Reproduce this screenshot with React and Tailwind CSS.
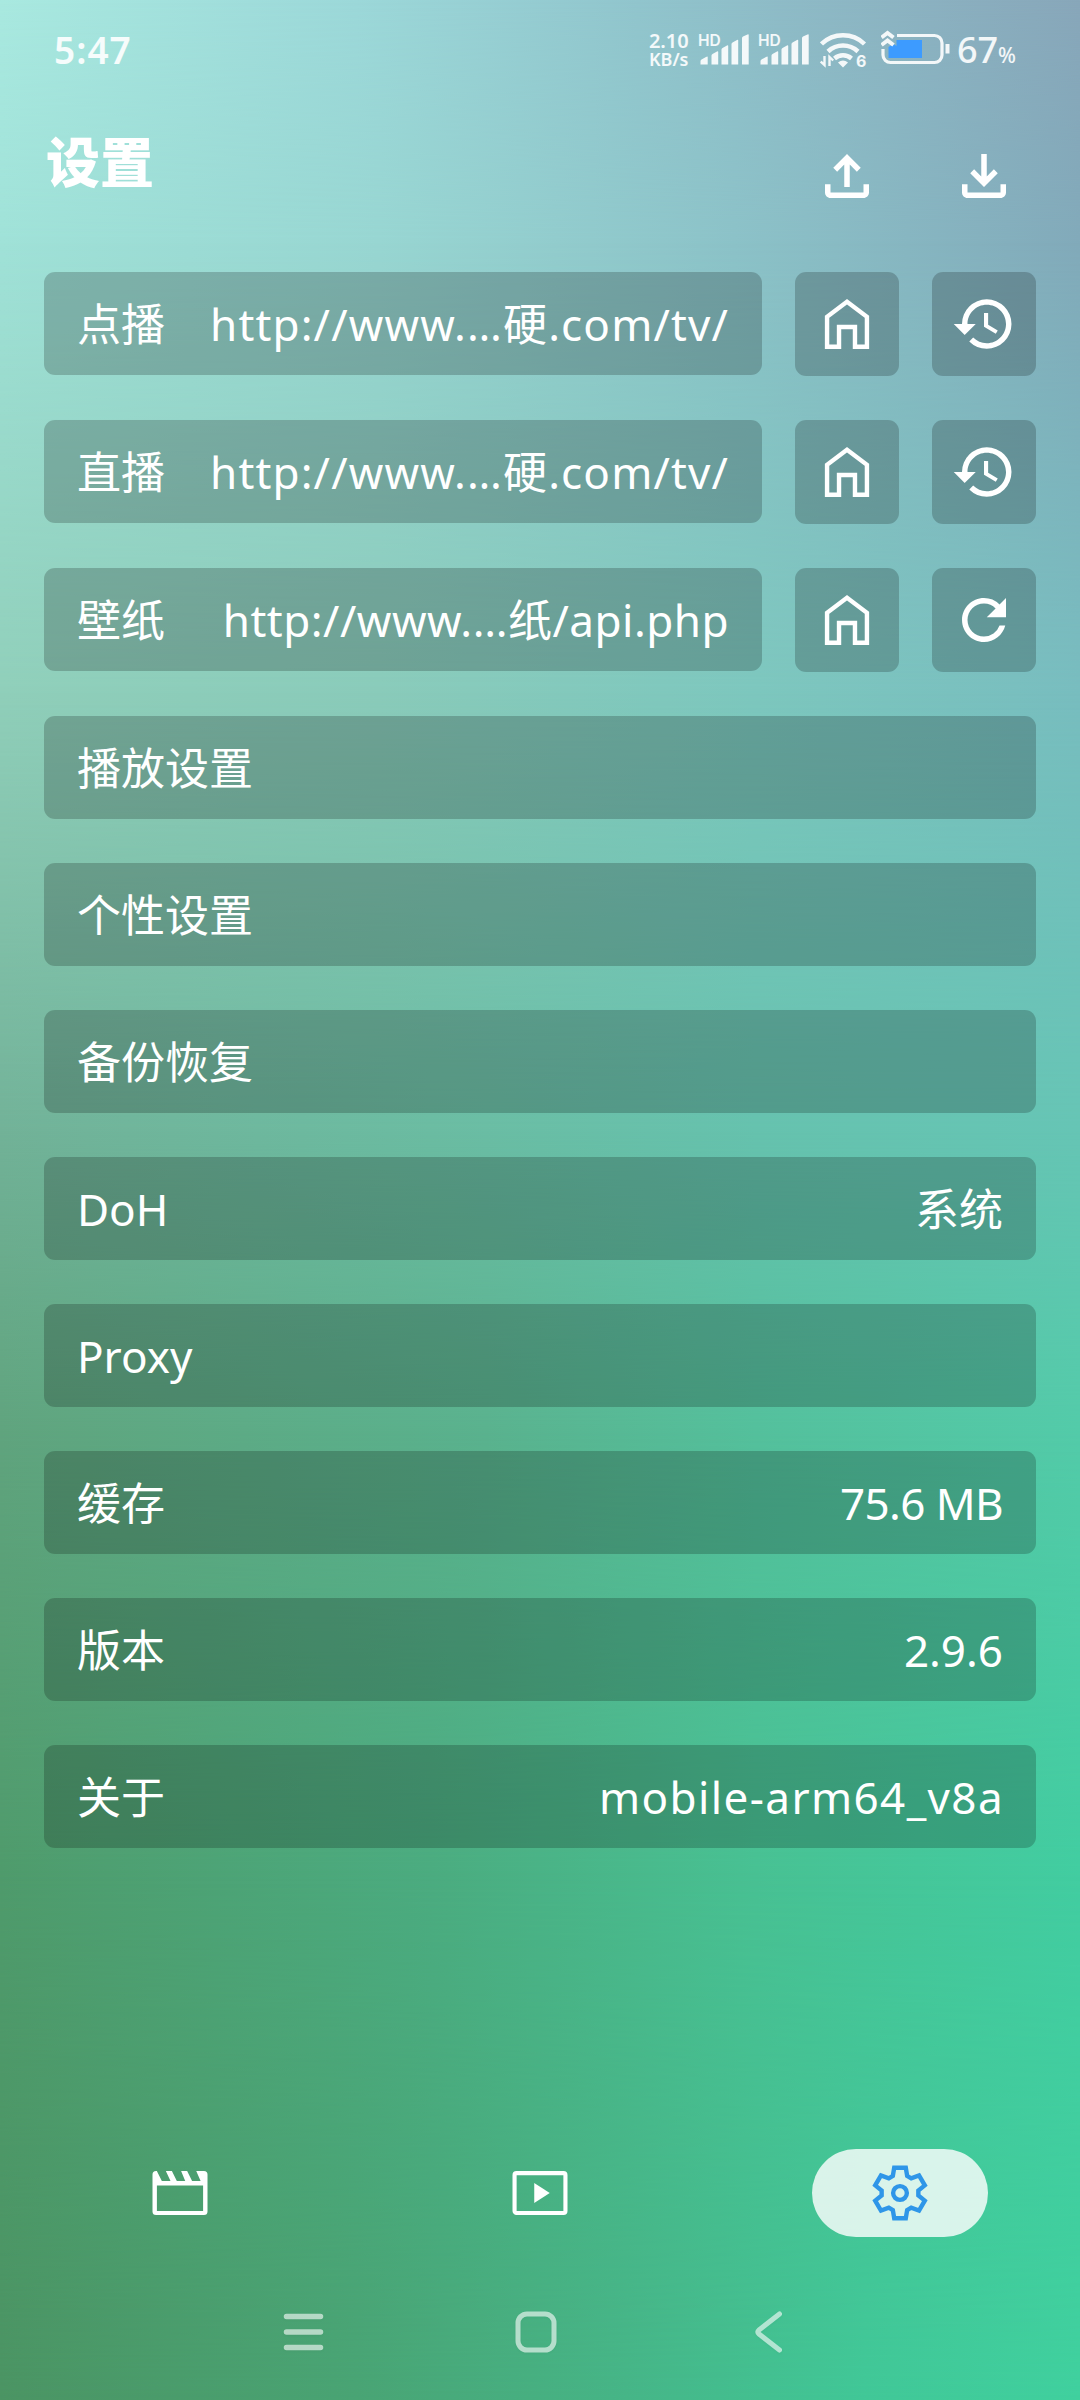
import React from 'react'
import { MdHistory, MdRefresh, MdOutlineFileUpload, MdOutlineFileDownload } from 'react-icons/md'

// Bandas horizontales del fondo: cada una se funde con la anterior
const layers = [
  { bg: 'bg-[linear-gradient(to_right,#a9e9e0_0%,#9cd8d9_33%,#91c5cd_59%,#88a7ba_100%)]', mask: '' },
  { bg: 'bg-[linear-gradient(to_right,#a0e2d8_0%,#98d6d2_35%,#8cc2c8_68%,#82aaba_100%)]', mask: 'mask-[linear-gradient(to_bottom,transparent_0px,black_240px)]' },
  { bg: 'bg-[linear-gradient(to_right,#90cfba_0%,#8acbba_35%,#7dc7be_70%,#78bdbf_100%)]', mask: 'mask-[linear-gradient(to_bottom,transparent_240px,black_690px)]' },
  { bg: 'bg-[linear-gradient(to_right,#72b298_0%,#6bbca2_40%,#66c2ae_70%,#66c5b5_100%)]', mask: 'mask-[linear-gradient(to_bottom,transparent_690px,black_1130px)]' },
  { bg: 'bg-[linear-gradient(to_right,#60a47e_0%,#5ab28e_45%,#54c09c_70%,#53cba9_100%)]', mask: 'mask-[linear-gradient(to_bottom,transparent_1130px,black_1430px)]' },
  { bg: 'bg-[linear-gradient(to_right,#4f9b6c_0%,#4bac80_40%,#48c193_70%,#42cda1_100%)]', mask: 'mask-[linear-gradient(to_bottom,transparent_1430px,black_1870px)]' },
  { bg: 'bg-[linear-gradient(to_right,#4b9463_0%,#49a474_33%,#46b587_58%,#41c797_80%,#40d09e_100%)]', mask: 'mask-[linear-gradient(to_bottom,transparent_1870px,black_2400px)]' },
]

const sources = [
  { label: '点播', value: 'http://www.…硬.com/tv/', tracking: 'tracking-[1.15px]', action: MdHistory },
  { label: '直播', value: 'http://www.…硬.com/tv/', tracking: 'tracking-[1.15px]', action: MdHistory },
  { label: '壁纸', value: 'http://www.…纸/api.php', tracking: 'tracking-[0.5px]', action: MdRefresh },
]

const options = [
  { label: '播放设置' },
  { label: '个性设置' },
  { label: '备份恢复' },
  { label: 'DoH', value: '系统' },
  { label: 'Proxy' },
  { label: '缓存', value: '75.6 MB', tracking: 'tracking-[-0.6px]' },
  { label: '版本', value: '2.9.6' },
  { label: '关于', value: 'mobile-arm64_v8a', tracking: 'tracking-[1.4px] -mr-px' },
]

const HomeIcon = () => (
  <svg viewBox="0 0 24 24" className="size-[66px]" fill="none" stroke="currentColor" strokeWidth="1.6">
    <path d="M4.75 20.25V9.38L12 3.95l7.25 5.43v10.87H14.9V13.1H9.1v7.15z" />
  </svg>
)

const MovieIcon = () => (
  <svg viewBox="0 0 24 24" className="size-[66px]" fill="currentColor" fillRule="evenodd">
    <path d="M3.3 4h.28L5.4 7.65h3.15L6.85 4h2.2l1.8 3.65h3.05L12.4 4h2.2l1.8 3.65h3.1L17.9 4h2.8A1.3 1.3 0 0 1 22 5.3v13.4a1.3 1.3 0 0 1-1.3 1.3H3.3A1.3 1.3 0 0 1 2 18.700V5.3A1.3 1.3 0 0 1 3.3 4zM3.600 9.25v9.25h16.800V9.25z" />
  </svg>
)

const PlayIcon = () => (
  <svg viewBox="0 0 24 24" className="size-[66px]" fill="none" stroke="currentColor" strokeWidth="1.5">
    <rect x="2.75" y="4.75" width="18.5" height="14.5" rx=".7" />
    <path d="M9.9 8.35v7.3l5.65-3.65z" fill="currentColor" stroke="none" />
  </svg>
)

const GearIcon = () => (
  <svg viewBox="-12 -12 24 24" className="size-[66px]" fill="none" stroke="currentColor" strokeWidth="1.6">
    <path d="M-2.1-9.2H2.1L2.6-6.2 4.07-5.35 6.92-6.42 9.02-2.78 6.67-.85V.85L9.02 2.78 6.92 6.42 4.07 5.35 2.6 6.2 2.1 9.2H-2.1L-2.6 6.2-4.07 5.35-6.92 6.42-9.02 2.78-6.67.85V-.85L-9.02-2.78-6.92-6.42-4.07-5.35-2.6-6.2z" />
    <circle r="2.5" />
  </svg>
)

const Signal = () => (
  <svg viewBox="0 0 60 40" className="h-10 w-[60px]" fill="currentColor">
    <text x="0" y="15.5" fontSize="15.5" fontWeight="600" className="font-['Inter',sans-serif]">HD</text>
    <path d="M2.500 31q0-1 1-1.500L8 27q1.700-1 1.700 0V34.500H2.500zM13.500 25.500q0-1 1-1.500L19 21.500q1.200-.6 1.200.5V34.500H13.500zM23.500 19.500q0-1 1-1.500L29 15.500q1.200-.6 1.200.5V34.500H23.500zM33.500 14q0-1 1-1.500L39 10q1.200-.6 1.200.5V34.500H33.500zM44 8q0-1 1-1.500L49.500 4.500q1.200-.6 1.200.5V34.500H44z" />
  </svg>
)

const Wifi = () => (
  <svg viewBox="0 0 48 40" className="h-10 w-12" fill="none" stroke="currentColor" strokeWidth="4.500">
    <path d="M1.500 14a31 31 0 0 1 43 0M8 21.500a22 22 0 0 1 30 0M14.500 28.500a13 13 0 0 1 17 0" />
    <path d="M18 32.500q5-4 10 0l-5 5z" fill="currentColor" stroke="none" />
    <path d="M4.500 26v9L.8 31.500M9.500 36v-9l3.700 3.500" strokeWidth="2.400" />
    <text x="36" y="36.500" fontSize="16" fontWeight="700" fill="currentColor" stroke="none" className="font-['Inter',sans-serif]">6</text>
  </svg>
)

const Battery = () => (
  <svg viewBox="0 0 72 40" className="h-10 w-[72px]" fill="none">
    <path d="M7.500 17l5-3 3 2V10H41v18H7.500z" fill="#3d9bff" />
    <path d="M16 5.500h37.500a7.500 7.500 0 0 1 7.500 7.500v12a7.500 7.500 0 0 1-7.500 7.500h-44A7.500 7.500 0 0 1 2 25v-6" stroke="currentColor" strokeWidth="3.200" />
    <path d="M66.500 14v9.500" stroke="currentColor" strokeWidth="4" />
    <path d="M.5 7.500 6.500 3l6 4.500M.5 15l6-4.500 6 4.500" stroke="currentColor" strokeWidth="4" />
  </svg>
)

const App = () => {
  return (
    <div className="relative isolate flex h-[2400px] w-[1080px] flex-col overflow-hidden font-['Noto_Sans','Noto_Sans_CJK_SC',sans-serif] text-white">
      {layers.map((layer, i) => (
        <div key={i} className={`absolute inset-0 -z-10 ${layer.bg} ${layer.mask}`} />
      ))}

      {/* Barra de estado */}
      <div className="flex h-[100px] items-center justify-between pr-16 pl-[54px] text-white/90">
        <span className="text-[37px] font-semibold tracking-[1px]">5:47</span>
        <div className="flex items-center">
          <div className="flex w-[49px] flex-col leading-[19px] font-semibold whitespace-nowrap">
            <span className="text-[20px]">2.10</span>
            <span className="text-[18px]">KB/s</span>
          </div>
          <Signal />
          <Signal />
          <div className="flex w-[63px] pl-[2px]">
            <Wifi />
          </div>
          <Battery />
          <div className="flex items-baseline pl-1 font-medium">
            <span className="text-[36px]">67</span>
            <span className="text-[21px]">%</span>
          </div>
        </div>
      </div>

      {/* Encabezado */}
      <div className="flex h-[172px] shrink-0 items-start justify-between px-11">
        <h1 className="pt-[22px] pl-[2px] text-[54px] leading-[80px] font-black">设置</h1>
        <div className="flex gap-[33px] pt-[43px]">
          <div className="flex w-[104px] justify-center">
            <MdOutlineFileUpload className="size-[66px]" />
          </div>
          <div className="flex w-[104px] justify-center">
            <MdOutlineFileDownload className="size-[66px]" />
          </div>
        </div>
      </div>

      {/* Ajustes */}
      <div className="flex flex-1 flex-col gap-11 px-11 text-[44px] leading-[60px]">
        {sources.map((item) => (
          <div key={item.label} className="flex gap-[33px]">
            <div className="flex h-[103px] flex-1 items-center justify-between rounded-[11px] bg-black/20 px-[33px]">
              <span>{item.label}</span>
              <span className={item.tracking}>{item.value}</span>
            </div>
            <div className="flex size-[104px] items-center justify-center rounded-[11px] bg-black/20">
              <HomeIcon />
            </div>
            <div className="flex size-[104px] items-center justify-center rounded-[11px] bg-black/20">
              <item.action className="size-[66px]" />
            </div>
          </div>
        ))}
        {options.map((item) => (
          <div key={item.label} className="flex h-[103px] items-center justify-between rounded-[11px] bg-black/20 px-[33px]">
            <span>{item.label}</span>
            {item.value && <span className={item.tracking}>{item.value}</span>}
          </div>
        ))}
      </div>

      {/* Pestañas */}
      <div className="grid h-[88px] grid-cols-3 place-items-center">
        <MovieIcon />
        <PlayIcon />
        <div className="flex h-[88px] w-[176px] items-center justify-center rounded-full bg-white/80 text-[#2f96e8]">
          <GearIcon />
        </div>
      </div>

      {/* Navegación del sistema */}
      <div className="flex h-[163px] items-center pl-[279px] pt-[26px] text-white/60 drop-shadow-xs">
        <svg viewBox="0 0 48 48" className="mr-[185px] size-12" fill="none" stroke="currentColor" strokeWidth="5.5" strokeLinecap="round">
          <path d="M7.500 8.500h34M7.500 24h34M7.500 39.500h34" />
        </svg>
        <svg viewBox="0 0 48 48" className="mr-[185px] size-12" fill="none" stroke="currentColor" strokeWidth="5">
          <rect x="6" y="6" width="36" height="36" rx="9" />
        </svg>
        <svg viewBox="0 0 48 48" className="size-12" fill="none" stroke="currentColor" strokeWidth="5" strokeLinecap="round" strokeLinejoin="round">
          <path d="M34.500 6 14 22q-2.500 2 0 4L34.500 42" />
        </svg>
      </div>
    </div>
  )
}

export default App
